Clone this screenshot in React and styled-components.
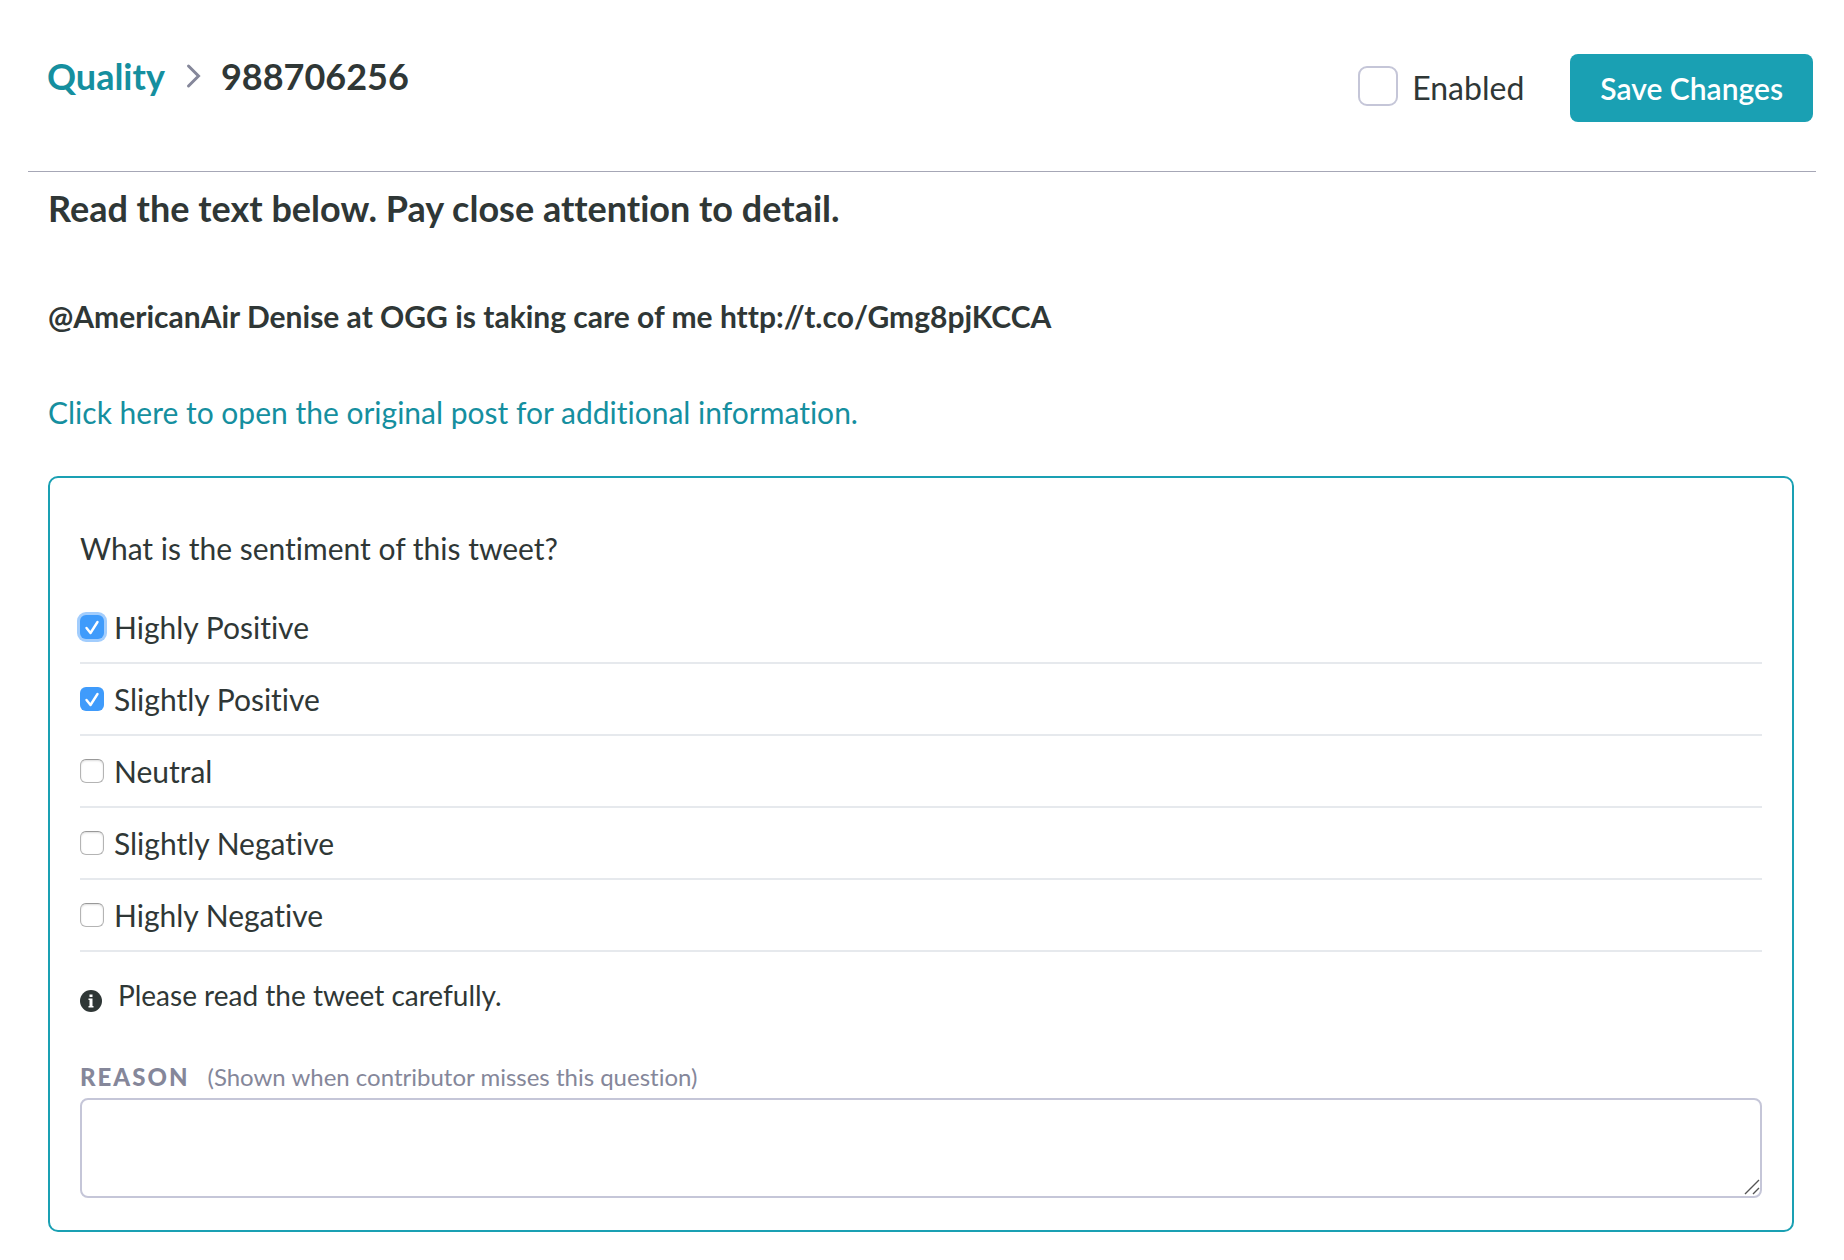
import { useState } from 'react';
import styled, { createGlobalStyle } from 'styled-components';

const GlobalStyle = createGlobalStyle`
  * {
    box-sizing: border-box;
  }

  body {
    margin: 0;
    background-color: #ffffff;
    color: #2f3736;
    font-family: Lato, 'Liberation Sans', sans-serif;
    font-size: 30px;
    line-height: 36px;
    font-variant-ligatures: none;
  }
`;

const Header = styled('header')`
  display: flex;
  justify-content: space-between;
  align-items: flex-start;
  margin: 0 28px;
  padding: 54px 3px 49px 19px;
  border-bottom: 1px solid #a6a7b6;
`;

const Breadcrumbs = styled('nav')`
  display: flex;
  align-items: center;
  gap: 20px;
  font-size: 36px;
  font-weight: 700;
  line-height: 44px;
`;

const BreadcrumbLink = styled('a')`
  color: #158f9f;
  text-decoration: none;
`;

const Actions = styled('div')`
  display: flex;
  align-items: center;
  gap: 46px;
`;

const EnabledLabel = styled('label')`
  display: flex;
  align-items: center;
  gap: 14px;
  font-size: 32px;
`;

const EnabledBox = styled('input')`
  appearance: none;
  width: 40px;
  height: 40px;
  margin: 0 0 4px;
  border: 2px solid #c5c6d8;
  border-radius: 9px;
  background-color: #ffffff;

  &:checked {
    background-color: #1aa0b3;
  }
`;

const SaveButton = styled('button')`
  height: 68px;
  padding: 0 30px;
  border: none;
  border-radius: 8px;
  background-color: #1aa0b3;
  color: #ffffff;
  font-family: inherit;
  font-size: 30px;
  font-weight: 600;
`;

const Content = styled('main')`
  padding: 14px 50px 28px 48px;
`;

const Title = styled('h1')`
  margin: 0;
  font-size: 36px;
  line-height: 44px;
`;

const Tweet = styled('p')`
  margin: 68px 0 60px;
  font-weight: 700;
`;

const PostLink = styled('a')`
  color: #158f9f;
  text-decoration: none;
`;

const Card = styled('section')`
  margin-top: 46px;
  padding: 52px 30px 32px;
  border: 2px solid #1aa0b3;
  border-radius: 10px;
`;

const OptionGroup = styled('fieldset')`
  min-width: 0;
  margin: 0;
  padding: 0;
  border: none;
`;

const Question = styled('legend')`
  margin-bottom: 26px;
  padding: 0;
`;

const Option = styled('label')`
  display: flex;
  align-items: center;
  gap: 10px;
  height: 72px;
  border-bottom: 2px solid #e6e9ed;
`;

const CheckWrap = styled('span')`
  display: grid;
  place-items: center;

  & > * {
    grid-area: 1 / 1;
  }
`;

const OptionBox = styled('input')`
  appearance: none;
  width: 24px;
  height: 24px;
  margin: 0;
  border: 1px solid #b4b4b4;
  border-top-color: #999999;
  border-radius: 6px;
  background-color: #ffffff;
  box-shadow: inset 0 1px 2px #dddddd;
  outline: none;

  &:checked {
    border: none;
    background-color: #3f9bfb;
    box-shadow: none;
  }

  &:focus {
    box-shadow: 0 0 0 3px #a2cdfd;
  }
`;

const CheckMark = styled('svg')`
  z-index: 1;
  pointer-events: none;
`;

const Hint = styled('p')`
  display: flex;
  align-items: center;
  gap: 16px;
  margin: 25px 0 46px;
  font-size: 28px;
`;

const InfoIcon = styled('svg')`
  margin-top: 12px;
`;

const ReasonLabel = styled('label')`
  display: flex;
  gap: 18px;
  color: #85879a;
  font-size: 24px;
  line-height: 36px;
`;

const ReasonTitle = styled('span')`
  font-weight: 900;
  letter-spacing: 2px;
`;

const ReasonField = styled('div')`
  display: grid;
  margin-top: 3px;

  & > * {
    grid-area: 1 / 1;
  }
`;

const ReasonInput = styled('textarea')`
  width: 100%;
  height: 100px;
  padding: 12px;
  border: 2px solid #c5c6d8;
  border-radius: 8px;
  background-color: #ffffff;
  font: inherit;
  outline: none;
  resize: none;
`;

const Grip = styled('svg')`
  place-self: end;
  margin: 0 2px 3px 0;
  pointer-events: none;
`;

const OPTIONS = [
  'Highly Positive',
  'Slightly Positive',
  'Neutral',
  'Slightly Negative',
  'Highly Negative',
];

export default function App() {
  const [enabled, setEnabled] = useState(false);
  const [selected, setSelected] = useState([
    'Highly Positive',
    'Slightly Positive',
  ]);

  const toggle = option => {
    setSelected(prev =>
      prev.includes(option)
        ? prev.filter(item => item !== option)
        : [...prev, option]
    );
  };

  return (
    <>
      <GlobalStyle />
      <Header>
        <Breadcrumbs>
          <BreadcrumbLink href="#quality">Quality</BreadcrumbLink>
          <svg width="16" height="26" viewBox="0 0 16 26" aria-hidden="true">
            <path
              d="M3.500 3 L13.500 13 L3.500 23"
              fill="none"
              stroke="#85879a"
              strokeWidth="3"
              strokeLinecap="round"
            />
          </svg>
          <span>988706256</span>
        </Breadcrumbs>
        <Actions>
          <EnabledLabel>
            <EnabledBox
              type="checkbox"
              checked={enabled}
              onChange={() => setEnabled(!enabled)}
            />
            Enabled
          </EnabledLabel>
          <SaveButton type="button">Save Changes</SaveButton>
        </Actions>
      </Header>
      <Content>
        <Title>Read the text below. Pay close attention to detail.</Title>
        <Tweet>
          @AmericanAir Denise at OGG is taking care of me
          http://t.co/Gmg8pjKCCA
        </Tweet>
        <PostLink href="#post">
          Click here to open the original post for additional information.
        </PostLink>
        <Card>
          <OptionGroup>
            <Question>What is the sentiment of this tweet?</Question>
            {OPTIONS.map((option, index) => (
              <Option key={option}>
                <CheckWrap>
                  <OptionBox
                    type="checkbox"
                    autoFocus={index === 0}
                    checked={selected.includes(option)}
                    onChange={() => toggle(option)}
                  />
                  {selected.includes(option) && (
                    <CheckMark width="24" height="24" viewBox="0 0 24 24">
                      <path
                        d="M6.5 13 L10.5 18 L17.5 7"
                        fill="none"
                        stroke="#ffffff"
                        strokeWidth="2.4"
                        strokeLinecap="round"
                        strokeLinejoin="round"
                      />
                    </CheckMark>
                  )}
                </CheckWrap>
                {option}
              </Option>
            ))}
          </OptionGroup>
          <Hint>
            <InfoIcon width="22" height="22" viewBox="0 0 22 22">
              <circle cx="11" cy="11" r="11" fill="#2f3736" />
              <path
                d="M9.5 4.5h3v2.500h-3z M8.5 8.500h4v7.500h1v1.500h-5V16h1v-6h-1z"
                fill="#ffffff"
              />
            </InfoIcon>
            Please read the tweet carefully.
          </Hint>
          <ReasonLabel htmlFor="reason">
            <ReasonTitle>REASON</ReasonTitle>
            <span>(Shown when contributor misses this question)</span>
          </ReasonLabel>
          <ReasonField>
            <ReasonInput id="reason" />
            <Grip width="16" height="16" viewBox="0 0 16 16">
              <path
                d="M1 15 L15 1 M9 15 L15 9"
                fill="none"
                stroke="#555555"
                strokeWidth="1.4"
              />
            </Grip>
          </ReasonField>
        </Card>
      </Content>
    </>
  );
}
